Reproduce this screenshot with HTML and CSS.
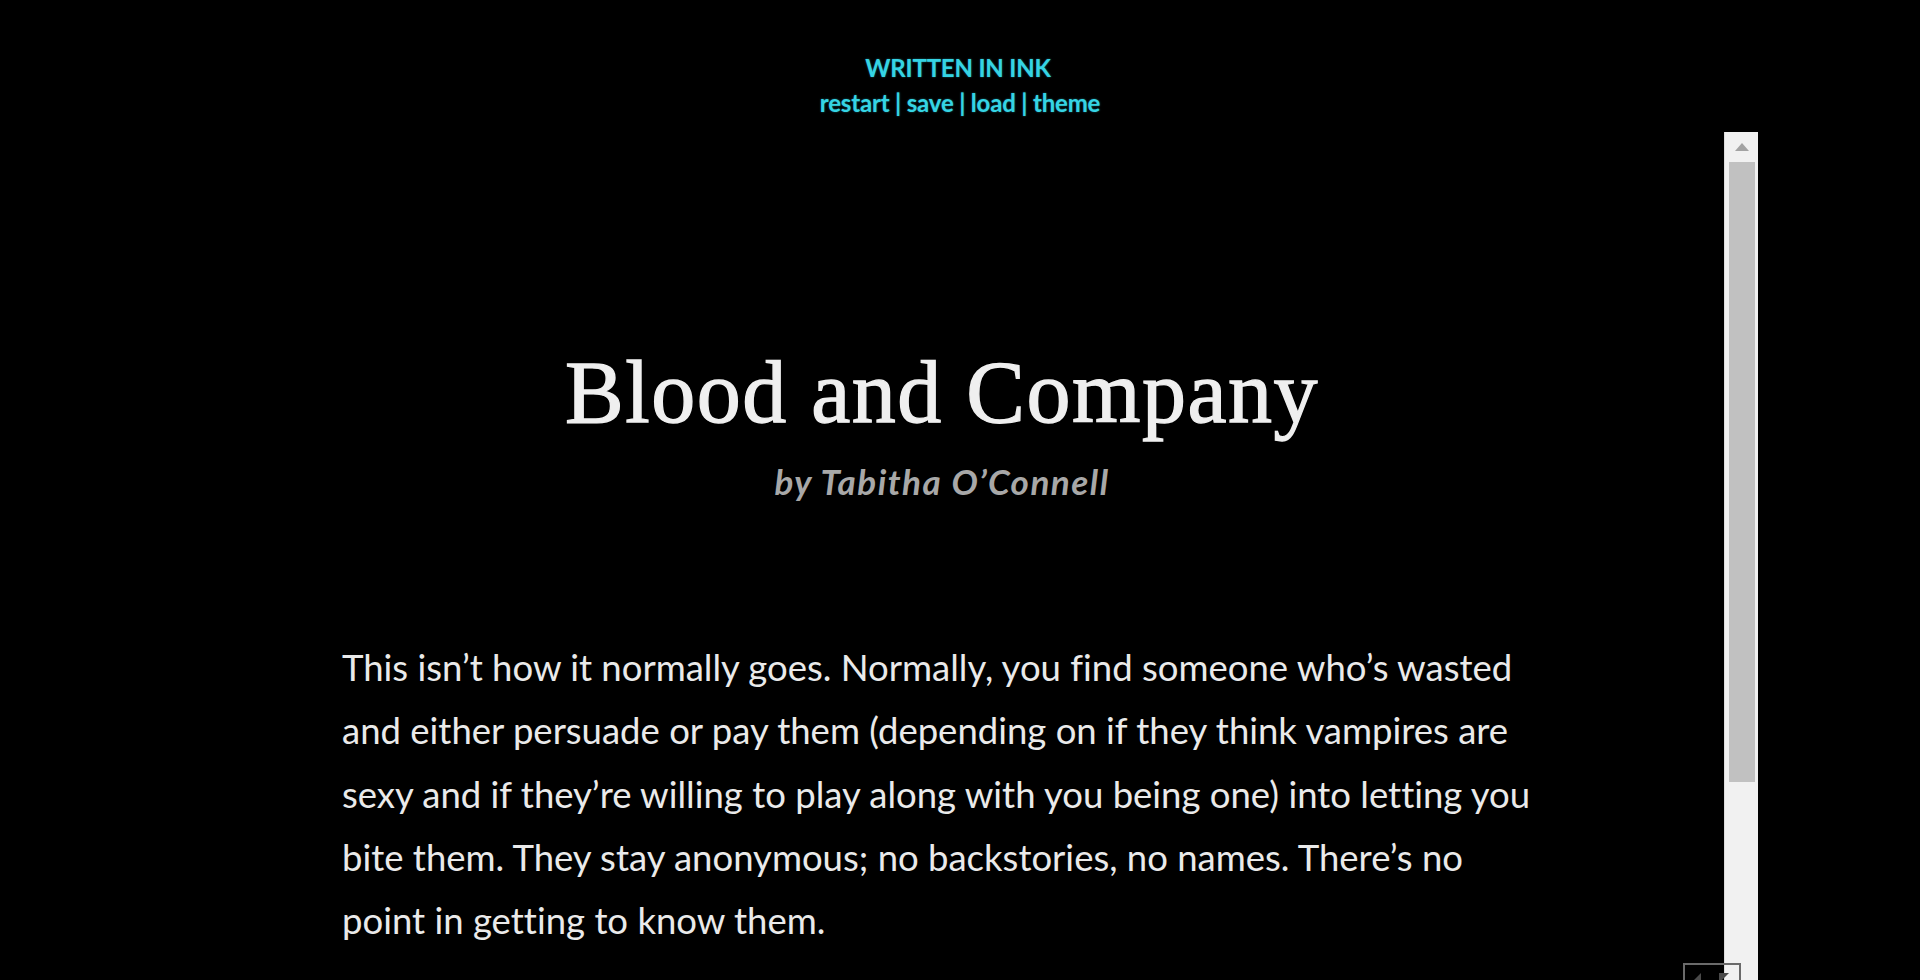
FILE: index.html
```html
<!DOCTYPE html>
<html lang="en">
<head>
<meta charset="utf-8">
<title>Blood and Company</title>
<link rel="stylesheet" href="styles.css">
</head>
<body>
  <header class="header">
    <div class="game-title">WRITTEN IN INK</div>
    <nav class="controls">
      <a href="#">restart</a> | <a href="#">save</a> | <a href="#">load</a> | <a href="#">theme</a>
    </nav>
  </header>
  <div class="frame">
    <main class="scroll">
      <div class="story">
        <h1 class="title">Blood and Company</h1>
        <h2 class="byline">by Tabitha O’Connell</h2>
        <p class="para">This isn’t how it normally goes. Normally, you find someone who’s wasted and either persuade or pay them (depending on if they think vampires are sexy and if they’re willing to play along with you being one) into letting you bite them. They stay anonymous; no backstories, no names. There’s no point in getting to know them.</p>
      </div>
    </main>
    <div class="scrollbar">
      <div class="sb-button"><span class="sb-arrow"></span></div>
      <div class="sb-thumb"></div>
    </div>
  </div>
  <div class="widget">
    <svg width="56" height="20" viewBox="0 0 56 20">
      <polygon points="6,18 16,8 16,18" fill="#4a4a4a"/>
      <polygon points="34,8 44,8 34,18" fill="#4a4a4a"/>
    </svg>
  </div>
</body>
</html>
```
FILE: styles.css
```css
html, body {
  margin: 0;
  padding: 0;
  background: #000;
  height: 980px;
  overflow: hidden;
}

body {
  font-family: Lato, "Liberation Sans", sans-serif;
  color: #ececec;
  font-variant-ligatures: none;
}

.header {
  text-align: center;
  padding-top: 50px;
  height: 84px;
  box-sizing: border-box;
  color: #35d4e4;
  font-weight: 700;
  font-size: 24px;
  line-height: 35px;
  letter-spacing: -0.2px;
  text-shadow: 0 0 2px rgba(53, 212, 228, 0.5);
}

.game-title {
  margin-right: 4px;
}

.controls a {
  color: #35d4e4;
  text-decoration: none;
}

.frame {
  display: flex;
  margin: 48px 162px 0 160px;
  height: 848px;
}

.scroll {
  flex: 1;
  overflow: hidden;
}

.story {
  width: 1200px;
  margin: 0 auto;
  padding-top: 211px;
}

.title {
  margin: 0;
  font-family: "Liberation Serif", "Times New Roman", serif;
  font-weight: 400;
  font-size: 88px;
  line-height: 100px;
  text-align: center;
  color: #efefef;
  -webkit-text-stroke: 1.3px #efefef;
  letter-spacing: 1.5px;
}

.byline {
  margin: 18px 0 0;
  font-family: Lato, sans-serif;
  font-style: italic;
  font-weight: 700;
  font-size: 35px;
  line-height: 40px;
  text-align: center;
  color: #a8a8a8;
  letter-spacing: 1.5px;
}

.para {
  margin: 135px 0 0;
  font-size: 36.5px;
  line-height: 63.3px;
  color: #eaeaea;
}

.scrollbar {
  width: 34px;
  background: #f1f1f1;
  border-left: 1px solid #dcdcdc;
  box-sizing: border-box;
  display: flex;
  flex-direction: column;
  align-items: center;
}

.sb-button {
  height: 30px;
  width: 100%;
  display: flex;
  align-items: center;
  justify-content: center;
}

.sb-arrow {
  width: 0;
  height: 0;
  border-left: 7px solid transparent;
  border-right: 7px solid transparent;
  border-bottom: 8px solid #a3a3a3;
}

.sb-thumb {
  width: 26px;
  height: 620px;
  background: #c1c1c1;
}

.widget {
  position: absolute;
  left: 1683px;
  top: 963px;
  width: 58px;
  height: 40px;
  border: 2px solid #6a6a6a;
  box-sizing: border-box;
}

.widget svg {
  display: block;
}
```
